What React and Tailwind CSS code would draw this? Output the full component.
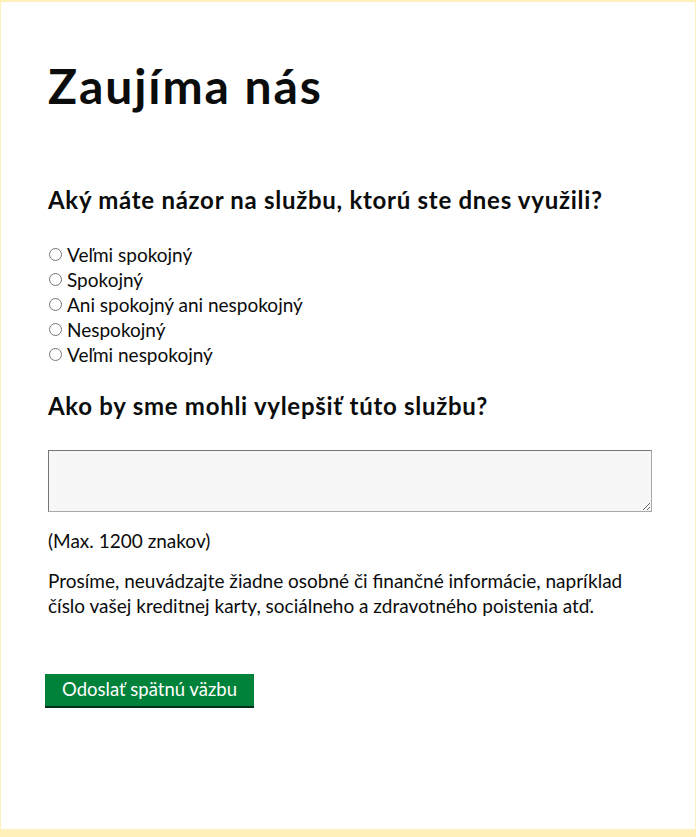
const options = [
  'Veľmi spokojný',
  'Spokojný',
  'Ani spokojný ani nespokojný',
  'Nespokojný',
  'Veľmi nespokojný',
]

export default function App() {
  return (
    <div className="min-h-[837px] bg-[#fef0b8] px-[1px] pt-[2px] pb-[8px] font-['Lato',sans-serif] text-[#0b0c0c]">
      <main className="min-h-[827px] bg-white px-[47px] pt-[58px]">
        <h1 className="text-[48px] font-bold leading-[1.1] tracking-[0.04em]">Zaujíma nás</h1>

        <form className="mt-[72px]">
          <fieldset>
            <legend className="text-[24px] font-bold leading-[1.25] tracking-[0.03em]">
              Aký máte názor na službu, ktorú ste dnes využili?
            </legend>
            <div className="mt-[27px] flex flex-col">
              {options.map((label) => (
                <label key={label} className="flex h-[25px] items-center text-[19px] leading-[25px]">
                  <input type="radio" name="rating" className="ml-[1px] mr-[5px] h-[13px] w-[13px]" />
                  {label}
                </label>
              ))}
            </div>
          </fieldset>

          <h2 className="mt-[24px] text-[24px] font-bold leading-[1.25] tracking-[0.03em]">
            Ako by sme mohli vylepšiť túto službu?
          </h2>

          <textarea
            className="mt-[29px] block h-[62px] w-[604px] border border-[#a9a9a9] border-t-[#767676] border-l-[#767676] bg-[#f7f7f7]"
            aria-label="Ako by sme mohli vylepšiť túto službu?"
          />

          <p className="mt-[16px] text-[19px] leading-[25px]">(Max. 1200 znakov)</p>
          <p className="mt-[15px] text-[19px] leading-[25px]">
            Prosíme, neuvádzajte žiadne osobné či finančné informácie, napríklad
            <br />
            číslo vašej kreditnej karty, sociálneho a zdravotného poistenia atď.
          </p>

          <button
            type="button"
            className="-ml-[3px] mt-[56px] h-[34px] w-[209px] border-b-2 border-[#002d18] bg-[#00823b] text-[18.5px] text-white"
          >
            Odoslať spätnú väzbu
          </button>
        </form>
      </main>
    </div>
  )
}
